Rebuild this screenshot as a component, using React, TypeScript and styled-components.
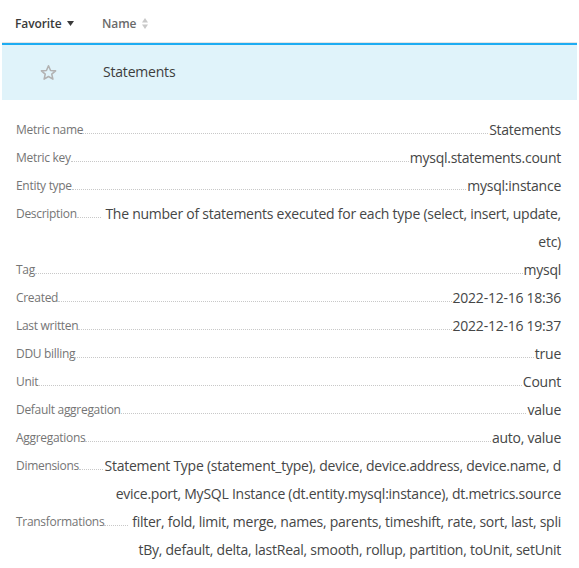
import React from "react";
import styled, { createGlobalStyle } from "styled-components";

const Global = createGlobalStyle`
  html, body { margin: 0; padding: 0; background: #fff; }
  body { font-family: "Open Sans", "Noto Sans", sans-serif; color: #454646; }
`;

const Table = styled.div`
  margin: 0 2px;
`;

const HeaderRow = styled.div`
  display: flex;
  align-items: center;
  height: 43px;
  padding-top: 5px;
  box-sizing: border-box;
  border-bottom: 1px solid #e4e4e4;
`;

const HeaderCell = styled.div<{ $width?: number; $active?: boolean }>`
  display: flex;
  align-items: center;
  gap: 6px;
  padding-left: 13px;
  width: ${(p) => (p.$width ? `${p.$width}px` : "auto")};
  box-sizing: border-box;
  font-size: 12px;
  font-weight: 600;
  letter-spacing: -0.1px;
  color: ${(p) => (p.$active ? "#3a3a3a" : "#6a6a6a")};
`;

const SelectedRow = styled.div`
  display: flex;
  align-items: center;
  height: 57px;
  padding-bottom: 3px;
  box-sizing: border-box;
  border-top: 2px solid #1eacf2;
  background: #e0f3fa;
`;

const StarCell = styled.div`
  width: 101px;
  display: flex;
  justify-content: center;
  padding-right: 8px;
  padding-top: 3px;
  box-sizing: border-box;
`;

const NameCell = styled.div`
  font-size: 14px;
  letter-spacing: -0.2px;
  color: #3d3d3d;
`;

const Details = styled.div`
  padding: 16px 16px 0 14px;
`;

const Row = styled.div`
  display: flex;
  align-items: flex-start;
  line-height: 28px;
`;

const Label = styled.div`
  flex: none;
  font-size: 12px;
  letter-spacing: -0.3px;
  color: #757575;
  white-space: nowrap;
`;

const Leader = styled.div`
  flex: 1 1 0;
  min-width: 24px;
  height: 17px;
  border-bottom: 1px dotted #c8c8c8;
  margin-right: 1px;
`;

const Value = styled.div`
  flex: 0 1 auto;
  font-size: 14px;
  letter-spacing: -0.25px;
  color: #454646;
  text-align: right;
  word-break: break-all;
`;

const Caret = () => (
  <svg width="7" height="5" viewBox="0 0 7 5">
    <path d="M0 0h7L3.5 5z" fill="#3a3a3a" />
  </svg>
);

const SortIcon = () => (
  <svg width="6" height="11" viewBox="0 0 6 11">
    <path d="M0 4.5L3 0l3 4.5z" fill="#c9c9c9" />
    <path d="M0 6.5h6L3 11z" fill="#c9c9c9" />
  </svg>
);

const Star = () => (
  <svg width="17" height="17" viewBox="0 0 24 24">
    <path
      d="M12 2.5l2.9 6.6 7.1.6-5.4 4.7 1.6 7-6.2-3.8-6.2 3.8 1.6-7L2 9.7l7.1-.6z"
      fill="none"
      stroke="#b2b2b2"
      strokeWidth="2.2"
      strokeLinejoin="round"
    />
  </svg>
);

const rows: [string, string][] = [
  ["Metric name", "Statements"],
  ["Metric key", "mysql.statements.count"],
  ["Entity type", "mysql:instance"],
  ["Description", "The number of statements executed for each type (select, insert, update, etc)"],
  ["Tag", "mysql"],
  ["Created", "2022-12-16 18:36"],
  ["Last written", "2022-12-16 19:37"],
  ["DDU billing", "true"],
  ["Unit", "Count"],
  ["Default aggregation", "value"],
  ["Aggregations", "auto, value"],
  [
    "Dimensions",
    "Statement Type (statement_type), device, device.address, device.name, device.port, MySQL Instance (dt.entity.mysql:instance), dt.metrics.source",
  ],
  [
    "Transformations",
    "filter, fold, limit, merge, names, parents, timeshift, rate, sort, last, splitBy, default, delta, lastReal, smooth, rollup, partition, toUnit, setUnit",
  ],
];

export default function App() {
  return (
    <>
      <Global />
      <Table>
        <HeaderRow>
          <HeaderCell $width={87} $active>
            Favorite <Caret />
          </HeaderCell>
          <HeaderCell>
            Name <SortIcon />
          </HeaderCell>
        </HeaderRow>
        <SelectedRow>
          <StarCell>
            <Star />
          </StarCell>
          <NameCell>Statements</NameCell>
        </SelectedRow>
        <Details>
          {rows.map(([k, v]) => (
            <Row key={k}>
              <Label>{k}</Label>
              <Leader />
              <Value>{v}</Value>
            </Row>
          ))}
        </Details>
      </Table>
    </>
  );
}
